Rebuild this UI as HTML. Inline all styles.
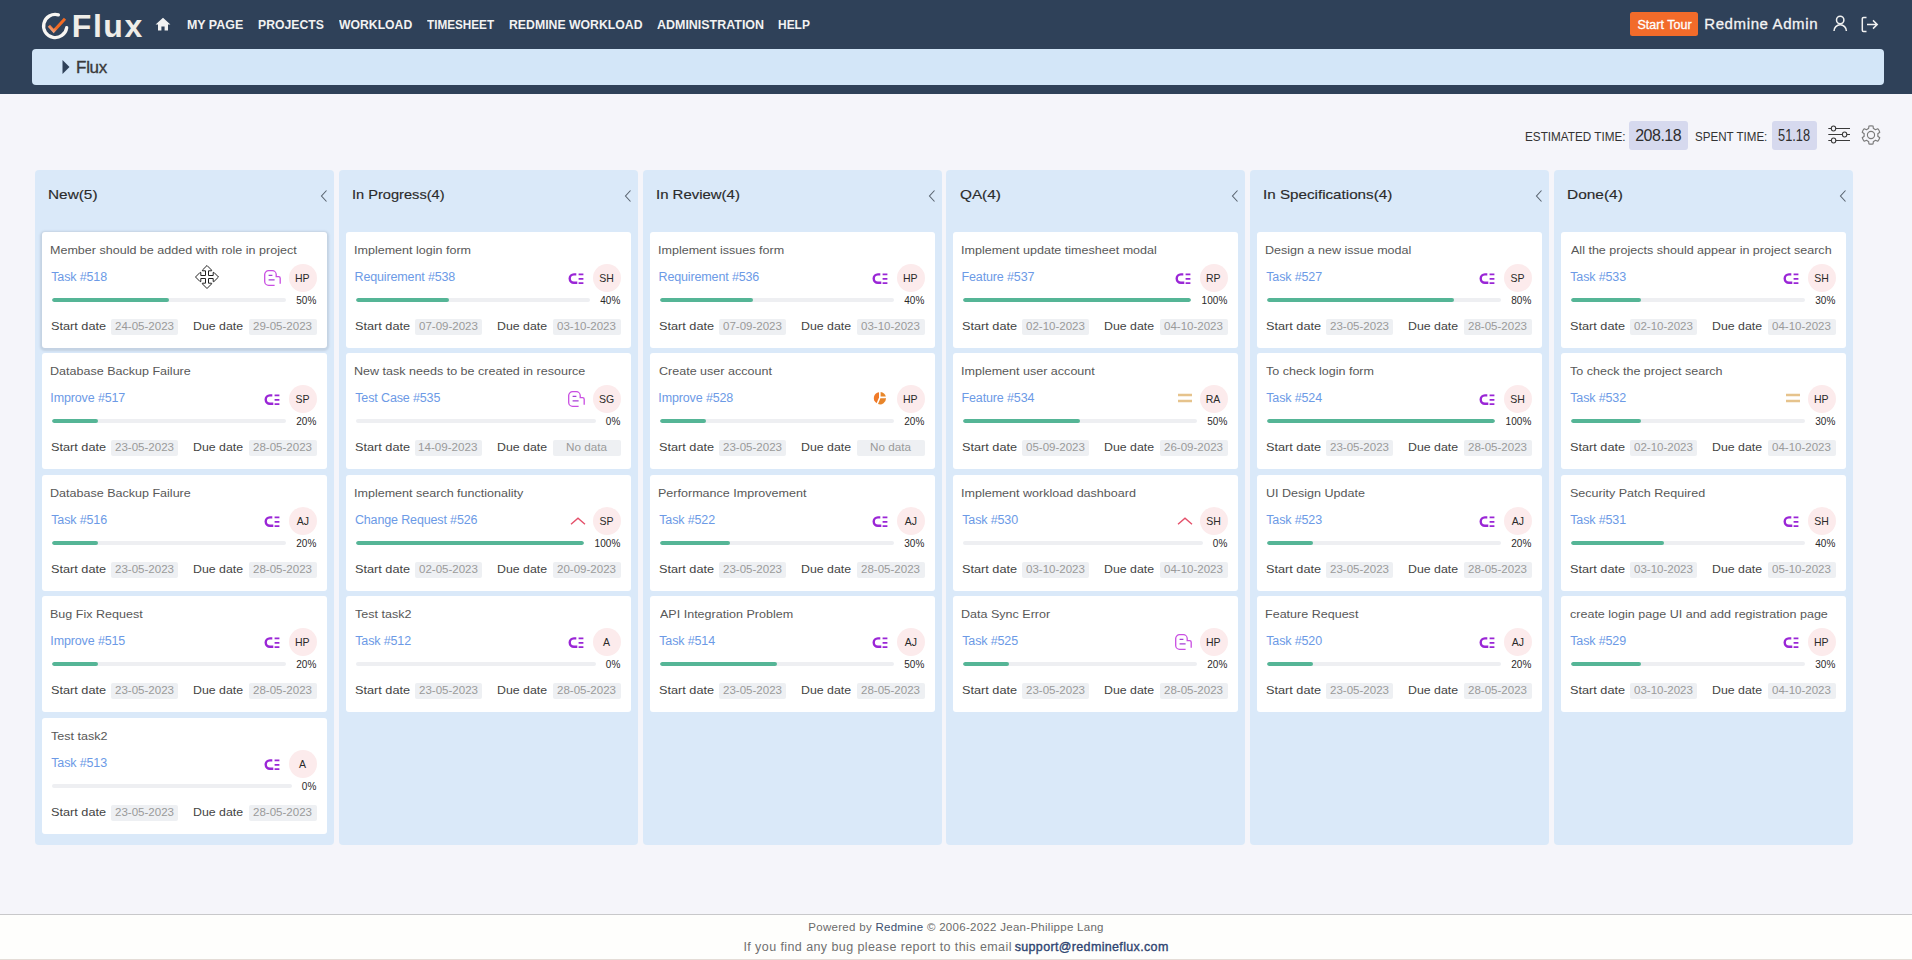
<!DOCTYPE html>
<html><head><meta charset="utf-8"><title>Flux</title>
<style>
*{box-sizing:border-box}
html,body{margin:0;padding:0}
body{width:1912px;height:960px;overflow:hidden;background:#f5f5fa;position:relative;font-family:"Liberation Sans",sans-serif}
.t{position:absolute;white-space:nowrap;line-height:1;}
#hdr{position:absolute;left:0;top:0;width:1912px;height:94px;background:#2f4159}
#crumb{position:absolute;left:32px;top:49.2px;width:1852px;height:35.6px;background:#d3e6f8;border-radius:4px}
.col{position:absolute;top:170px;width:298.5px;height:675px;background:#dae9f9;border-radius:4px}
.card{position:absolute;width:284.6px;height:116px;background:#fff;border-radius:3px}
.card.hov{box-shadow:0 1px 2px 2px rgba(90,100,120,.17)}
.ic{position:absolute;line-height:0}
.ic svg{display:block}
.av{position:absolute;width:28px;height:28px;border-radius:50%;background:#fcebec}
.bar{position:absolute;height:4px;background:#eeeff2;border-radius:2px;overflow:hidden}
.bar i{display:block;height:4px;background:#55b596;border-radius:2px}
.db{position:absolute;width:67.5px;height:16px;background:#eef0f3;border-radius:2px}
.chev{position:absolute}
.vb{position:absolute;top:121.2px;height:28.7px;background:#d6d9ee;border-radius:3px}
#foot{position:absolute;left:0;top:914px;width:1912px;height:46px;background:#fefefc;border-top:1px solid #c8c8ca;border-bottom:1px solid #e4dcd6}
</style></head><body>
<div id="hdr"></div>
<svg style="position:absolute;left:40px;top:10.8px" width="30" height="32" viewBox="0 0 30 32">
<defs><linearGradient id="ck" x1="0" y1="1" x2="1" y2="0"><stop offset="0" stop-color="#f6b9a0"/><stop offset="0.35" stop-color="#f26a22"/><stop offset="1" stop-color="#f26a22"/></linearGradient></defs>
<path d="M18.4 3.85 A11.6 11.6 0 1 0 26.67 16.71" fill="none" stroke="#f7f5f2" stroke-width="3.3" stroke-linecap="round"/>
<path d="M8.9 14.8 L13.7 20 L25 7.7" fill="none" stroke="url(#ck)" stroke-width="3" stroke-linecap="butt" stroke-linejoin="miter"/>
</svg>
<svg style="position:absolute;left:155px;top:17px" width="16" height="14" viewBox="0 0 16 14"><path d="M8 0.8 L15.4 7.6 H13 V13.6 H9.6 V9.4 H6.4 V13.6 H3 V7.6 H0.6 Z" fill="#f2f2f2"/></svg>
<div class="t" style="left:186.96px;top:18.06px;font-size:13.4px;color:#f2f2f2;transform:scaleX(0.9281);transform-origin:0 0;font-weight:bold;">MY PAGE</div><div class="t" style="left:257.58px;top:18.06px;font-size:13.4px;color:#f2f2f2;transform:scaleX(0.9118);transform-origin:0 0;font-weight:bold;">PROJECTS</div><div class="t" style="left:338.70px;top:18.06px;font-size:13.4px;color:#f2f2f2;transform:scaleX(0.9117);transform-origin:0 0;font-weight:bold;">WORKLOAD</div><div class="t" style="left:426.77px;top:18.06px;font-size:13.4px;color:#f2f2f2;transform:scaleX(0.8757);transform-origin:0 0;font-weight:bold;">TIMESHEET</div><div class="t" style="left:508.98px;top:18.06px;font-size:13.4px;color:#f2f2f2;transform:scaleX(0.9163);transform-origin:0 0;font-weight:bold;">REDMINE WORKLOAD</div><div class="t" style="left:657.27px;top:18.06px;font-size:13.4px;color:#f2f2f2;transform:scaleX(0.9306);transform-origin:0 0;font-weight:bold;">ADMINISTRATION</div><div class="t" style="left:778.20px;top:18.06px;font-size:13.4px;color:#f2f2f2;transform:scaleX(0.8924);transform-origin:0 0;font-weight:bold;">HELP</div><div class="t" style="left:71.85px;top:10.11px;font-size:32px;color:#efede8;letter-spacing:1.533px;font-weight:bold;">Flux</div><div style="position:absolute;left:1630px;top:12px;width:68px;height:24px;background:#f26b2a;border-radius:2.5px"></div><div class="t" style="left:1637.45px;top:18.92px;font-size:12.5px;color:#ffffff;letter-spacing:0.022px;-webkit-text-stroke:0.3px #fff;">Start Tour</div><div class="t" style="left:1704.20px;top:16.40px;font-size:15px;color:#f4f4f4;letter-spacing:0.621px;-webkit-text-stroke:0.3px #f4f4f4;">Redmine Admin</div>
<svg style="position:absolute;left:1832px;top:15px" width="16" height="17" viewBox="0 0 16 17"><circle cx="8.2" cy="5" r="3.7" fill="none" stroke="#f2f2f2" stroke-width="1.5"/><path d="M2 16 A6.2 6.2 0 0 1 14.4 16" fill="none" stroke="#f2f2f2" stroke-width="1.5"/></svg>
<svg style="position:absolute;left:1861px;top:16px" width="18" height="17" viewBox="0 0 18 17"><path d="M5.5 1.5 H2.5 A1.2 1.2 0 0 0 1.3 2.7 V14.3 A1.2 1.2 0 0 0 2.5 15.5 H5.5" fill="none" stroke="#f2f2f2" stroke-width="1.5"/><path d="M6 8.5 H16.2 M12 4.4 L16.2 8.5 L12 12.6" fill="none" stroke="#f2f2f2" stroke-width="1.5"/></svg>
<div id="crumb"></div>
<svg style="position:absolute;left:62px;top:60px" width="8" height="14" viewBox="0 0 8 14"><path d="M0.5 0 L7.5 7 L0.5 14 Z" fill="#2f4159"/></svg>
<div class="t" style="left:76.10px;top:59.01px;font-size:17px;color:#3a3a3a;letter-spacing:-0.333px;-webkit-text-stroke:0.35px #3a3a3a;">Flux</div>
<div class="vb" style="left:1629.3px;width:58.7px"></div>
<div class="vb" style="left:1772px;width:45px"></div>
<div class="t" style="left:1525.04px;top:130.26px;font-size:13.4px;color:#333;transform:scaleX(0.8757);transform-origin:0 0;">ESTIMATED TIME:</div><div class="t" style="left:1635.20px;top:128.46px;font-size:16px;color:#2e2e2e;letter-spacing:-0.490px;">208.18</div><div class="t" style="left:1695.48px;top:130.26px;font-size:13.4px;color:#333;transform:scaleX(0.8655);transform-origin:0 0;">SPENT TIME:</div><div class="t" style="left:1778.48px;top:128.46px;font-size:16px;color:#2e2e2e;transform:scaleX(0.8010);transform-origin:0 0;">51.18</div>
<svg style="position:absolute;left:1828px;top:125px" width="23" height="19" viewBox="0 0 23 19"><g fill="none" stroke="#3a3a3a" stroke-width="1.1"><path d="M0.3 3.5 H3.2 M7.8 3.5 H22 M0.3 9.5 H14.3 M18.9 9.5 H22 M0.3 15.5 H3.3 M7.9 15.5 H22"/><ellipse cx="5.5" cy="3.5" rx="2.2" ry="2.5"/><ellipse cx="16.6" cy="9.5" rx="2.2" ry="2.5"/><ellipse cx="5.6" cy="15.5" rx="2.2" ry="2.5"/></g></svg>
<svg style="position:absolute;left:1860.7px;top:125px" width="20" height="20" viewBox="2 2 20 20"><path fill="none" stroke="#7a7a7a" stroke-width="1.15" stroke-linejoin="round" d="M9.64 5.52L9.93 3.04A9.2 9.2 0 0 1 14.07 3.04L14.36 5.52A6.9 6.9 0 0 1 16.44 6.71L18.73 5.73A9.2 9.2 0 0 1 20.80 9.31L18.80 10.80A6.9 6.9 0 0 1 18.80 13.20L20.80 14.69A9.2 9.2 0 0 1 18.73 18.27L16.44 17.29A6.9 6.9 0 0 1 14.36 18.48L14.07 20.96A9.2 9.2 0 0 1 9.93 20.96L9.64 18.48A6.9 6.9 0 0 1 7.56 17.29L5.27 18.27A9.2 9.2 0 0 1 3.20 14.69L5.20 13.20A6.9 6.9 0 0 1 5.20 10.80L3.20 9.31A9.2 9.2 0 0 1 5.27 5.73L7.56 6.71A6.9 6.9 0 0 1 9.64 5.52Z"/><circle cx="12" cy="12" r="3.6" fill="none" stroke="#7a7a7a" stroke-width="1.15"/></svg>
<div class="col" style="left:35.00px;"></div>
<div class="t" style="left:48.38px;top:188.73px;font-size:12.6px;color:#2b2b2b;transform:scaleX(1.2201);transform-origin:0 0;-webkit-text-stroke:0.15px #2b2b2b;">New(5)</div>
<svg class="chev" style="left:319.00px;top:189px" width="10" height="14" viewBox="0 0 10 14"><path d="M7.5 1.5 L2.5 7 L7.5 12.5" fill="none" stroke="#5a6470" stroke-width="1.1"/></svg>
<div class="card hov" style="left:42.00px;top:232.00px;"></div>
<div class="t" style="left:50.46px;top:244.87px;font-size:11.5px;color:#585858;transform:scaleX(1.0900);transform-origin:0 0;">Member should be added with role in project</div>
<div class="t" style="left:51.25px;top:271.32px;font-size:12.5px;color:#6c9ae6;letter-spacing:-0.141px;">Task #518</div>
<div class="ic" style="left:263.50px;top:270.30px;"><svg width="17" height="16" viewBox="0 0 17 16"><path d="M16.2 13.8 V8.2 Q16.2 6.6 14.6 6.6 H12.2 V4.6 A3.9 3.9 0 0 0 8.3 0.7 H4.6 A3.9 3.9 0 0 0 0.7 4.6 V11.4 A3.9 3.9 0 0 0 4.6 15.3 H10.6" fill="none" stroke="#c94ee2" stroke-width="1.3"/><path d="M4.6 5.4h3.8 M4.6 9.9h6" stroke="#a63fd6" stroke-width="1.2"/></svg></div>
<div class="av" style="left:288.50px;top:263.70px;"></div>
<div class="t" style="left:294.95px;top:272.71px;font-size:10.5px;color:#2a2a2a;">HP</div>
<div class="t" style="left:296.16px;top:296.14px;font-size:10px;color:#2a2a2a;letter-spacing:0.096px;">50%</div>
<div class="bar" style="left:51.50px;top:298.20px;width:234.49px;"><i style="width:117.24px"></i></div>
<div class="t" style="left:50.92px;top:321.29px;font-size:11px;color:#444444;transform:scaleX(1.1551);transform-origin:0 0;">Start date</div>
<div class="db" style="left:110.50px;top:319.00px;"></div>
<div class="t" style="left:114.72px;top:321.74px;font-size:10px;color:#9a9a9a;transform:scaleX(1.1542);transform-origin:0 0;">24-05-2023</div>
<div class="t" style="left:192.99px;top:321.29px;font-size:11px;color:#444444;transform:scaleX(1.1201);transform-origin:0 0;">Due date</div>
<div class="db" style="left:249.00px;top:319.00px;"></div>
<div class="t" style="left:253.22px;top:321.74px;font-size:10px;color:#9a9a9a;transform:scaleX(1.1542);transform-origin:0 0;">29-05-2023</div>
<div class="card" style="left:42.00px;top:353.00px;"></div>
<div class="t" style="left:50.46px;top:365.87px;font-size:11.5px;color:#585858;transform:scaleX(1.0900);transform-origin:0 0;">Database Backup Failure</div>
<div class="t" style="left:50.35px;top:392.32px;font-size:12.5px;color:#6c9ae6;letter-spacing:-0.136px;">Improve #517</div>
<div class="ic" style="left:263.50px;top:393.00px;"><svg width="16" height="13" viewBox="0 0 16 13"><path d="M8.3 2.4 H5.9 A4.2 4.2 0 0 0 5.9 10.8 H9.3" fill="none" stroke="#9a26d6" stroke-width="2.4"/><path d="M10.6 2.3h4.8 M10.6 6.9h4.8 M10.6 11.2h4.8" stroke="#9a26d6" stroke-width="1.8"/></svg></div>
<div class="av" style="left:288.50px;top:384.70px;"></div>
<div class="t" style="left:295.45px;top:393.71px;font-size:10.5px;color:#2a2a2a;">SP</div>
<div class="t" style="left:296.16px;top:417.14px;font-size:10px;color:#2a2a2a;letter-spacing:0.096px;">20%</div>
<div class="bar" style="left:51.50px;top:419.20px;width:234.49px;"><i style="width:46.90px"></i></div>
<div class="t" style="left:50.92px;top:442.29px;font-size:11px;color:#444444;transform:scaleX(1.1551);transform-origin:0 0;">Start date</div>
<div class="db" style="left:110.50px;top:440.00px;"></div>
<div class="t" style="left:114.72px;top:442.74px;font-size:10px;color:#9a9a9a;transform:scaleX(1.1542);transform-origin:0 0;">23-05-2023</div>
<div class="t" style="left:192.99px;top:442.29px;font-size:11px;color:#444444;transform:scaleX(1.1201);transform-origin:0 0;">Due date</div>
<div class="db" style="left:249.00px;top:440.00px;"></div>
<div class="t" style="left:253.22px;top:442.74px;font-size:10px;color:#9a9a9a;transform:scaleX(1.1542);transform-origin:0 0;">28-05-2023</div>
<div class="card" style="left:42.00px;top:475.00px;"></div>
<div class="t" style="left:50.46px;top:487.87px;font-size:11.5px;color:#585858;transform:scaleX(1.0900);transform-origin:0 0;">Database Backup Failure</div>
<div class="t" style="left:51.25px;top:514.32px;font-size:12.5px;color:#6c9ae6;letter-spacing:-0.141px;">Task #516</div>
<div class="ic" style="left:263.50px;top:515.00px;"><svg width="16" height="13" viewBox="0 0 16 13"><path d="M8.3 2.4 H5.9 A4.2 4.2 0 0 0 5.9 10.8 H9.3" fill="none" stroke="#9a26d6" stroke-width="2.4"/><path d="M10.6 2.3h4.8 M10.6 6.9h4.8 M10.6 11.2h4.8" stroke="#9a26d6" stroke-width="1.8"/></svg></div>
<div class="av" style="left:288.50px;top:506.70px;"></div>
<div class="t" style="left:296.65px;top:515.71px;font-size:10.5px;color:#2a2a2a;">AJ</div>
<div class="t" style="left:296.16px;top:539.13px;font-size:10px;color:#2a2a2a;letter-spacing:0.096px;">20%</div>
<div class="bar" style="left:51.50px;top:541.20px;width:234.49px;"><i style="width:46.90px"></i></div>
<div class="t" style="left:50.92px;top:564.29px;font-size:11px;color:#444444;transform:scaleX(1.1551);transform-origin:0 0;">Start date</div>
<div class="db" style="left:110.50px;top:562.00px;"></div>
<div class="t" style="left:114.72px;top:564.74px;font-size:10px;color:#9a9a9a;transform:scaleX(1.1542);transform-origin:0 0;">23-05-2023</div>
<div class="t" style="left:192.99px;top:564.29px;font-size:11px;color:#444444;transform:scaleX(1.1201);transform-origin:0 0;">Due date</div>
<div class="db" style="left:249.00px;top:562.00px;"></div>
<div class="t" style="left:253.22px;top:564.74px;font-size:10px;color:#9a9a9a;transform:scaleX(1.1542);transform-origin:0 0;">28-05-2023</div>
<div class="card" style="left:42.00px;top:596.00px;"></div>
<div class="t" style="left:50.46px;top:608.87px;font-size:11.5px;color:#585858;transform:scaleX(1.0900);transform-origin:0 0;">Bug Fix Request</div>
<div class="t" style="left:50.35px;top:635.32px;font-size:12.5px;color:#6c9ae6;letter-spacing:-0.136px;">Improve #515</div>
<div class="ic" style="left:263.50px;top:636.00px;"><svg width="16" height="13" viewBox="0 0 16 13"><path d="M8.3 2.4 H5.9 A4.2 4.2 0 0 0 5.9 10.8 H9.3" fill="none" stroke="#9a26d6" stroke-width="2.4"/><path d="M10.6 2.3h4.8 M10.6 6.9h4.8 M10.6 11.2h4.8" stroke="#9a26d6" stroke-width="1.8"/></svg></div>
<div class="av" style="left:288.50px;top:627.70px;"></div>
<div class="t" style="left:294.95px;top:636.71px;font-size:10.5px;color:#2a2a2a;">HP</div>
<div class="t" style="left:296.16px;top:660.13px;font-size:10px;color:#2a2a2a;letter-spacing:0.096px;">20%</div>
<div class="bar" style="left:51.50px;top:662.20px;width:234.49px;"><i style="width:46.90px"></i></div>
<div class="t" style="left:50.92px;top:685.29px;font-size:11px;color:#444444;transform:scaleX(1.1551);transform-origin:0 0;">Start date</div>
<div class="db" style="left:110.50px;top:683.00px;"></div>
<div class="t" style="left:114.72px;top:685.74px;font-size:10px;color:#9a9a9a;transform:scaleX(1.1542);transform-origin:0 0;">23-05-2023</div>
<div class="t" style="left:192.99px;top:685.29px;font-size:11px;color:#444444;transform:scaleX(1.1201);transform-origin:0 0;">Due date</div>
<div class="db" style="left:249.00px;top:683.00px;"></div>
<div class="t" style="left:253.22px;top:685.74px;font-size:10px;color:#9a9a9a;transform:scaleX(1.1542);transform-origin:0 0;">28-05-2023</div>
<div class="card" style="left:42.00px;top:718.00px;"></div>
<div class="t" style="left:51.23px;top:730.87px;font-size:11.5px;color:#585858;transform:scaleX(1.0900);transform-origin:0 0;">Test task2</div>
<div class="t" style="left:51.25px;top:757.32px;font-size:12.5px;color:#6c9ae6;letter-spacing:-0.141px;">Task #513</div>
<div class="ic" style="left:263.50px;top:758.00px;"><svg width="16" height="13" viewBox="0 0 16 13"><path d="M8.3 2.4 H5.9 A4.2 4.2 0 0 0 5.9 10.8 H9.3" fill="none" stroke="#9a26d6" stroke-width="2.4"/><path d="M10.6 2.3h4.8 M10.6 6.9h4.8 M10.6 11.2h4.8" stroke="#9a26d6" stroke-width="1.8"/></svg></div>
<div class="av" style="left:288.50px;top:749.70px;"></div>
<div class="t" style="left:298.90px;top:758.71px;font-size:10.5px;color:#2a2a2a;">A</div>
<div class="t" style="left:301.76px;top:782.13px;font-size:10px;color:#2a2a2a;letter-spacing:0.137px;">0%</div>
<div class="bar" style="left:51.50px;top:784.20px;width:240.05px;"><i style="width:0.00px"></i></div>
<div class="t" style="left:50.92px;top:807.29px;font-size:11px;color:#444444;transform:scaleX(1.1551);transform-origin:0 0;">Start date</div>
<div class="db" style="left:110.50px;top:805.00px;"></div>
<div class="t" style="left:114.72px;top:807.74px;font-size:10px;color:#9a9a9a;transform:scaleX(1.1542);transform-origin:0 0;">23-05-2023</div>
<div class="t" style="left:192.99px;top:807.29px;font-size:11px;color:#444444;transform:scaleX(1.1201);transform-origin:0 0;">Due date</div>
<div class="db" style="left:249.00px;top:805.00px;"></div>
<div class="t" style="left:253.22px;top:807.74px;font-size:10px;color:#9a9a9a;transform:scaleX(1.1542);transform-origin:0 0;">28-05-2023</div>
<div class="col" style="left:339.00px;"></div>
<div class="t" style="left:352.27px;top:188.73px;font-size:12.6px;color:#2b2b2b;transform:scaleX(1.1597);transform-origin:0 0;-webkit-text-stroke:0.15px #2b2b2b;">In Progress(4)</div>
<svg class="chev" style="left:623.00px;top:189px" width="10" height="14" viewBox="0 0 10 14"><path d="M7.5 1.5 L2.5 7 L7.5 12.5" fill="none" stroke="#5a6470" stroke-width="1.1"/></svg>
<div class="card" style="left:346.00px;top:232.00px;"></div>
<div class="t" style="left:354.36px;top:244.87px;font-size:11.5px;color:#585858;transform:scaleX(1.0900);transform-origin:0 0;">Implement login form</div>
<div class="t" style="left:354.50px;top:271.32px;font-size:12.5px;color:#6c9ae6;letter-spacing:-0.135px;">Requirement #538</div>
<div class="ic" style="left:567.50px;top:272.00px;"><svg width="16" height="13" viewBox="0 0 16 13"><path d="M8.3 2.4 H5.9 A4.2 4.2 0 0 0 5.9 10.8 H9.3" fill="none" stroke="#9a26d6" stroke-width="2.4"/><path d="M10.6 2.3h4.8 M10.6 6.9h4.8 M10.6 11.2h4.8" stroke="#9a26d6" stroke-width="1.8"/></svg></div>
<div class="av" style="left:592.50px;top:263.70px;"></div>
<div class="t" style="left:599.30px;top:272.71px;font-size:10.5px;color:#2a2a2a;">SH</div>
<div class="t" style="left:600.16px;top:296.14px;font-size:10px;color:#2a2a2a;letter-spacing:0.097px;">40%</div>
<div class="bar" style="left:355.50px;top:298.20px;width:234.49px;"><i style="width:93.79px"></i></div>
<div class="t" style="left:354.92px;top:321.29px;font-size:11px;color:#444444;transform:scaleX(1.1551);transform-origin:0 0;">Start date</div>
<div class="db" style="left:414.50px;top:319.00px;"></div>
<div class="t" style="left:418.84px;top:321.74px;font-size:10px;color:#9a9a9a;transform:scaleX(1.1519);transform-origin:0 0;">07-09-2023</div>
<div class="t" style="left:496.99px;top:321.29px;font-size:11px;color:#444444;transform:scaleX(1.1201);transform-origin:0 0;">Due date</div>
<div class="db" style="left:553.00px;top:319.00px;"></div>
<div class="t" style="left:557.34px;top:321.74px;font-size:10px;color:#9a9a9a;transform:scaleX(1.1519);transform-origin:0 0;">03-10-2023</div>
<div class="card" style="left:346.00px;top:353.00px;"></div>
<div class="t" style="left:354.46px;top:365.87px;font-size:11.5px;color:#585858;transform:scaleX(1.0900);transform-origin:0 0;">New task needs to be created in resource</div>
<div class="t" style="left:355.25px;top:392.32px;font-size:12.5px;color:#6c9ae6;letter-spacing:-0.132px;">Test Case #535</div>
<div class="ic" style="left:567.50px;top:391.30px;"><svg width="17" height="16" viewBox="0 0 17 16"><path d="M16.2 13.8 V8.2 Q16.2 6.6 14.6 6.6 H12.2 V4.6 A3.9 3.9 0 0 0 8.3 0.7 H4.6 A3.9 3.9 0 0 0 0.7 4.6 V11.4 A3.9 3.9 0 0 0 4.6 15.3 H10.6" fill="none" stroke="#c94ee2" stroke-width="1.3"/><path d="M4.6 5.4h3.8 M4.6 9.9h6" stroke="#a63fd6" stroke-width="1.2"/></svg></div>
<div class="av" style="left:592.50px;top:384.70px;"></div>
<div class="t" style="left:598.97px;top:393.71px;font-size:10.5px;color:#2a2a2a;">SG</div>
<div class="t" style="left:605.76px;top:417.14px;font-size:10px;color:#2a2a2a;letter-spacing:0.137px;">0%</div>
<div class="bar" style="left:355.50px;top:419.20px;width:240.05px;"><i style="width:0.00px"></i></div>
<div class="t" style="left:354.92px;top:442.29px;font-size:11px;color:#444444;transform:scaleX(1.1551);transform-origin:0 0;">Start date</div>
<div class="db" style="left:414.50px;top:440.00px;"></div>
<div class="t" style="left:418.43px;top:442.74px;font-size:10px;color:#9a9a9a;transform:scaleX(1.1600);transform-origin:0 0;">14-09-2023</div>
<div class="t" style="left:496.99px;top:442.29px;font-size:11px;color:#444444;transform:scaleX(1.1201);transform-origin:0 0;">Due date</div>
<div class="db" style="left:553.00px;top:440.00px;"></div>
<div class="t" style="left:565.85px;top:442.31px;font-size:10.5px;color:#9a9a9a;transform:scaleX(1.1127);transform-origin:0 0;">No data</div>
<div class="card" style="left:346.00px;top:475.00px;"></div>
<div class="t" style="left:354.36px;top:487.87px;font-size:11.5px;color:#585858;transform:scaleX(1.0900);transform-origin:0 0;">Implement search functionality</div>
<div class="t" style="left:354.90px;top:514.32px;font-size:12.5px;color:#6c9ae6;letter-spacing:-0.138px;">Change Request #526</div>
<div class="ic" style="left:569.90px;top:516.20px;"><svg width="16" height="10" viewBox="0 0 16 10"><path d="M1 8.2 L8 2.2 L15 8.2" fill="none" stroke="#e4506a" stroke-width="1.4"/></svg></div>
<div class="av" style="left:592.50px;top:506.70px;"></div>
<div class="t" style="left:599.45px;top:515.71px;font-size:10.5px;color:#2a2a2a;">SP</div>
<div class="t" style="left:594.50px;top:539.13px;font-size:10px;color:#2a2a2a;letter-spacing:0.082px;">100%</div>
<div class="bar" style="left:355.50px;top:541.20px;width:228.92px;"><i style="width:228.92px"></i></div>
<div class="t" style="left:354.92px;top:564.29px;font-size:11px;color:#444444;transform:scaleX(1.1551);transform-origin:0 0;">Start date</div>
<div class="db" style="left:414.50px;top:562.00px;"></div>
<div class="t" style="left:418.84px;top:564.74px;font-size:10px;color:#9a9a9a;transform:scaleX(1.1519);transform-origin:0 0;">02-05-2023</div>
<div class="t" style="left:496.99px;top:564.29px;font-size:11px;color:#444444;transform:scaleX(1.1201);transform-origin:0 0;">Due date</div>
<div class="db" style="left:553.00px;top:562.00px;"></div>
<div class="t" style="left:557.22px;top:564.74px;font-size:10px;color:#9a9a9a;transform:scaleX(1.1542);transform-origin:0 0;">20-09-2023</div>
<div class="card" style="left:346.00px;top:596.00px;"></div>
<div class="t" style="left:355.23px;top:608.87px;font-size:11.5px;color:#585858;transform:scaleX(1.0900);transform-origin:0 0;">Test task2</div>
<div class="t" style="left:355.25px;top:635.32px;font-size:12.5px;color:#6c9ae6;letter-spacing:-0.140px;">Task #512</div>
<div class="ic" style="left:567.50px;top:636.00px;"><svg width="16" height="13" viewBox="0 0 16 13"><path d="M8.3 2.4 H5.9 A4.2 4.2 0 0 0 5.9 10.8 H9.3" fill="none" stroke="#9a26d6" stroke-width="2.4"/><path d="M10.6 2.3h4.8 M10.6 6.9h4.8 M10.6 11.2h4.8" stroke="#9a26d6" stroke-width="1.8"/></svg></div>
<div class="av" style="left:592.50px;top:627.70px;"></div>
<div class="t" style="left:602.90px;top:636.71px;font-size:10.5px;color:#2a2a2a;">A</div>
<div class="t" style="left:605.76px;top:660.13px;font-size:10px;color:#2a2a2a;letter-spacing:0.137px;">0%</div>
<div class="bar" style="left:355.50px;top:662.20px;width:240.05px;"><i style="width:0.00px"></i></div>
<div class="t" style="left:354.92px;top:685.29px;font-size:11px;color:#444444;transform:scaleX(1.1551);transform-origin:0 0;">Start date</div>
<div class="db" style="left:414.50px;top:683.00px;"></div>
<div class="t" style="left:418.72px;top:685.74px;font-size:10px;color:#9a9a9a;transform:scaleX(1.1542);transform-origin:0 0;">23-05-2023</div>
<div class="t" style="left:496.99px;top:685.29px;font-size:11px;color:#444444;transform:scaleX(1.1201);transform-origin:0 0;">Due date</div>
<div class="db" style="left:553.00px;top:683.00px;"></div>
<div class="t" style="left:557.22px;top:685.74px;font-size:10px;color:#9a9a9a;transform:scaleX(1.1542);transform-origin:0 0;">28-05-2023</div>
<div class="col" style="left:643.00px;"></div>
<div class="t" style="left:656.24px;top:188.73px;font-size:12.6px;color:#2b2b2b;transform:scaleX(1.1866);transform-origin:0 0;-webkit-text-stroke:0.15px #2b2b2b;">In Review(4)</div>
<svg class="chev" style="left:927.00px;top:189px" width="10" height="14" viewBox="0 0 10 14"><path d="M7.5 1.5 L2.5 7 L7.5 12.5" fill="none" stroke="#5a6470" stroke-width="1.1"/></svg>
<div class="card" style="left:650.00px;top:232.00px;"></div>
<div class="t" style="left:658.36px;top:244.87px;font-size:11.5px;color:#585858;transform:scaleX(1.0900);transform-origin:0 0;">Implement issues form</div>
<div class="t" style="left:658.50px;top:271.32px;font-size:12.5px;color:#6c9ae6;letter-spacing:-0.135px;">Requirement #536</div>
<div class="ic" style="left:871.50px;top:272.00px;"><svg width="16" height="13" viewBox="0 0 16 13"><path d="M8.3 2.4 H5.9 A4.2 4.2 0 0 0 5.9 10.8 H9.3" fill="none" stroke="#9a26d6" stroke-width="2.4"/><path d="M10.6 2.3h4.8 M10.6 6.9h4.8 M10.6 11.2h4.8" stroke="#9a26d6" stroke-width="1.8"/></svg></div>
<div class="av" style="left:896.50px;top:263.70px;"></div>
<div class="t" style="left:902.95px;top:272.71px;font-size:10.5px;color:#2a2a2a;">HP</div>
<div class="t" style="left:904.16px;top:296.14px;font-size:10px;color:#2a2a2a;letter-spacing:0.097px;">40%</div>
<div class="bar" style="left:659.50px;top:298.20px;width:234.49px;"><i style="width:93.79px"></i></div>
<div class="t" style="left:658.92px;top:321.29px;font-size:11px;color:#444444;transform:scaleX(1.1551);transform-origin:0 0;">Start date</div>
<div class="db" style="left:718.50px;top:319.00px;"></div>
<div class="t" style="left:722.84px;top:321.74px;font-size:10px;color:#9a9a9a;transform:scaleX(1.1519);transform-origin:0 0;">07-09-2023</div>
<div class="t" style="left:800.99px;top:321.29px;font-size:11px;color:#444444;transform:scaleX(1.1201);transform-origin:0 0;">Due date</div>
<div class="db" style="left:857.00px;top:319.00px;"></div>
<div class="t" style="left:861.34px;top:321.74px;font-size:10px;color:#9a9a9a;transform:scaleX(1.1519);transform-origin:0 0;">03-10-2023</div>
<div class="card" style="left:650.00px;top:353.00px;"></div>
<div class="t" style="left:658.90px;top:365.87px;font-size:11.5px;color:#585858;transform:scaleX(1.0900);transform-origin:0 0;">Create user account</div>
<div class="t" style="left:658.35px;top:392.32px;font-size:12.5px;color:#6c9ae6;letter-spacing:-0.136px;">Improve #528</div>
<div class="ic" style="left:871.90px;top:390.00px;"><svg width="16" height="16" viewBox="0 0 16 16"><path d="M7 2.2 A6 6 0 0 0 4.6 13.2 L7 7.6 Z" fill="#f07a28"/><path d="M8.6 2 A6 6 0 0 1 13.8 6.6 H8.6 Z" fill="#e8872a"/><path d="M8.4 8.2 H14 A6 6 0 0 1 6 14 Z" fill="#e8852a"/></svg></div>
<div class="av" style="left:896.50px;top:384.70px;"></div>
<div class="t" style="left:902.95px;top:393.71px;font-size:10.5px;color:#2a2a2a;">HP</div>
<div class="t" style="left:904.16px;top:417.14px;font-size:10px;color:#2a2a2a;letter-spacing:0.096px;">20%</div>
<div class="bar" style="left:659.50px;top:419.20px;width:234.49px;"><i style="width:46.90px"></i></div>
<div class="t" style="left:658.92px;top:442.29px;font-size:11px;color:#444444;transform:scaleX(1.1551);transform-origin:0 0;">Start date</div>
<div class="db" style="left:718.50px;top:440.00px;"></div>
<div class="t" style="left:722.72px;top:442.74px;font-size:10px;color:#9a9a9a;transform:scaleX(1.1542);transform-origin:0 0;">23-05-2023</div>
<div class="t" style="left:800.99px;top:442.29px;font-size:11px;color:#444444;transform:scaleX(1.1201);transform-origin:0 0;">Due date</div>
<div class="db" style="left:857.00px;top:440.00px;"></div>
<div class="t" style="left:869.85px;top:442.31px;font-size:10.5px;color:#9a9a9a;transform:scaleX(1.1127);transform-origin:0 0;">No data</div>
<div class="card" style="left:650.00px;top:475.00px;"></div>
<div class="t" style="left:658.46px;top:487.87px;font-size:11.5px;color:#585858;transform:scaleX(1.0900);transform-origin:0 0;">Performance Improvement</div>
<div class="t" style="left:659.25px;top:514.32px;font-size:12.5px;color:#6c9ae6;letter-spacing:-0.140px;">Task #522</div>
<div class="ic" style="left:871.50px;top:515.00px;"><svg width="16" height="13" viewBox="0 0 16 13"><path d="M8.3 2.4 H5.9 A4.2 4.2 0 0 0 5.9 10.8 H9.3" fill="none" stroke="#9a26d6" stroke-width="2.4"/><path d="M10.6 2.3h4.8 M10.6 6.9h4.8 M10.6 11.2h4.8" stroke="#9a26d6" stroke-width="1.8"/></svg></div>
<div class="av" style="left:896.50px;top:506.70px;"></div>
<div class="t" style="left:904.65px;top:515.71px;font-size:10.5px;color:#2a2a2a;">AJ</div>
<div class="t" style="left:904.16px;top:539.13px;font-size:10px;color:#2a2a2a;letter-spacing:0.097px;">30%</div>
<div class="bar" style="left:659.50px;top:541.20px;width:234.49px;"><i style="width:70.35px"></i></div>
<div class="t" style="left:658.92px;top:564.29px;font-size:11px;color:#444444;transform:scaleX(1.1551);transform-origin:0 0;">Start date</div>
<div class="db" style="left:718.50px;top:562.00px;"></div>
<div class="t" style="left:722.72px;top:564.74px;font-size:10px;color:#9a9a9a;transform:scaleX(1.1542);transform-origin:0 0;">23-05-2023</div>
<div class="t" style="left:800.99px;top:564.29px;font-size:11px;color:#444444;transform:scaleX(1.1201);transform-origin:0 0;">Due date</div>
<div class="db" style="left:857.00px;top:562.00px;"></div>
<div class="t" style="left:861.22px;top:564.74px;font-size:10px;color:#9a9a9a;transform:scaleX(1.1542);transform-origin:0 0;">28-05-2023</div>
<div class="card" style="left:650.00px;top:596.00px;"></div>
<div class="t" style="left:659.50px;top:608.87px;font-size:11.5px;color:#585858;transform:scaleX(1.0900);transform-origin:0 0;">API Integration Problem</div>
<div class="t" style="left:659.25px;top:635.32px;font-size:12.5px;color:#6c9ae6;letter-spacing:-0.141px;">Task #514</div>
<div class="ic" style="left:871.50px;top:636.00px;"><svg width="16" height="13" viewBox="0 0 16 13"><path d="M8.3 2.4 H5.9 A4.2 4.2 0 0 0 5.9 10.8 H9.3" fill="none" stroke="#9a26d6" stroke-width="2.4"/><path d="M10.6 2.3h4.8 M10.6 6.9h4.8 M10.6 11.2h4.8" stroke="#9a26d6" stroke-width="1.8"/></svg></div>
<div class="av" style="left:896.50px;top:627.70px;"></div>
<div class="t" style="left:904.65px;top:636.71px;font-size:10.5px;color:#2a2a2a;">AJ</div>
<div class="t" style="left:904.16px;top:660.13px;font-size:10px;color:#2a2a2a;letter-spacing:0.096px;">50%</div>
<div class="bar" style="left:659.50px;top:662.20px;width:234.49px;"><i style="width:117.24px"></i></div>
<div class="t" style="left:658.92px;top:685.29px;font-size:11px;color:#444444;transform:scaleX(1.1551);transform-origin:0 0;">Start date</div>
<div class="db" style="left:718.50px;top:683.00px;"></div>
<div class="t" style="left:722.72px;top:685.74px;font-size:10px;color:#9a9a9a;transform:scaleX(1.1542);transform-origin:0 0;">23-05-2023</div>
<div class="t" style="left:800.99px;top:685.29px;font-size:11px;color:#444444;transform:scaleX(1.1201);transform-origin:0 0;">Due date</div>
<div class="db" style="left:857.00px;top:683.00px;"></div>
<div class="t" style="left:861.22px;top:685.74px;font-size:10px;color:#9a9a9a;transform:scaleX(1.1542);transform-origin:0 0;">28-05-2023</div>
<div class="col" style="left:946.00px;"></div>
<div class="t" style="left:959.87px;top:188.73px;font-size:12.6px;color:#2b2b2b;transform:scaleX(1.2155);transform-origin:0 0;-webkit-text-stroke:0.15px #2b2b2b;">QA(4)</div>
<svg class="chev" style="left:1230.00px;top:189px" width="10" height="14" viewBox="0 0 10 14"><path d="M7.5 1.5 L2.5 7 L7.5 12.5" fill="none" stroke="#5a6470" stroke-width="1.1"/></svg>
<div class="card" style="left:953.00px;top:232.00px;"></div>
<div class="t" style="left:961.36px;top:244.87px;font-size:11.5px;color:#585858;transform:scaleX(1.0900);transform-origin:0 0;">Implement update timesheet modal</div>
<div class="t" style="left:961.50px;top:271.32px;font-size:12.5px;color:#6c9ae6;letter-spacing:-0.132px;">Feature #537</div>
<div class="ic" style="left:1174.50px;top:272.00px;"><svg width="16" height="13" viewBox="0 0 16 13"><path d="M8.3 2.4 H5.9 A4.2 4.2 0 0 0 5.9 10.8 H9.3" fill="none" stroke="#9a26d6" stroke-width="2.4"/><path d="M10.6 2.3h4.8 M10.6 6.9h4.8 M10.6 11.2h4.8" stroke="#9a26d6" stroke-width="1.8"/></svg></div>
<div class="av" style="left:1199.50px;top:263.70px;"></div>
<div class="t" style="left:1205.95px;top:272.71px;font-size:10.5px;color:#2a2a2a;">RP</div>
<div class="t" style="left:1201.51px;top:296.14px;font-size:10px;color:#2a2a2a;letter-spacing:0.082px;">100%</div>
<div class="bar" style="left:962.50px;top:298.20px;width:228.92px;"><i style="width:228.92px"></i></div>
<div class="t" style="left:961.92px;top:321.29px;font-size:11px;color:#444444;transform:scaleX(1.1551);transform-origin:0 0;">Start date</div>
<div class="db" style="left:1021.50px;top:319.00px;"></div>
<div class="t" style="left:1025.84px;top:321.74px;font-size:10px;color:#9a9a9a;transform:scaleX(1.1519);transform-origin:0 0;">02-10-2023</div>
<div class="t" style="left:1103.99px;top:321.29px;font-size:11px;color:#444444;transform:scaleX(1.1201);transform-origin:0 0;">Due date</div>
<div class="db" style="left:1160.00px;top:319.00px;"></div>
<div class="t" style="left:1164.34px;top:321.74px;font-size:10px;color:#9a9a9a;transform:scaleX(1.1519);transform-origin:0 0;">04-10-2023</div>
<div class="card" style="left:953.00px;top:353.00px;"></div>
<div class="t" style="left:961.36px;top:365.87px;font-size:11.5px;color:#585858;transform:scaleX(1.0900);transform-origin:0 0;">Implement user account</div>
<div class="t" style="left:961.50px;top:392.32px;font-size:12.5px;color:#6c9ae6;letter-spacing:-0.133px;">Feature #534</div>
<div class="ic" style="left:1176.60px;top:392.30px;"><svg width="16" height="12" viewBox="0 0 16 12"><path d="M1 3h14 M1 9h14" stroke="#e6c38c" stroke-width="2.6"/></svg></div>
<div class="av" style="left:1199.50px;top:384.70px;"></div>
<div class="t" style="left:1205.68px;top:393.71px;font-size:10.5px;color:#2a2a2a;">RA</div>
<div class="t" style="left:1207.16px;top:417.14px;font-size:10px;color:#2a2a2a;letter-spacing:0.096px;">50%</div>
<div class="bar" style="left:962.50px;top:419.20px;width:234.49px;"><i style="width:117.24px"></i></div>
<div class="t" style="left:961.92px;top:442.29px;font-size:11px;color:#444444;transform:scaleX(1.1551);transform-origin:0 0;">Start date</div>
<div class="db" style="left:1021.50px;top:440.00px;"></div>
<div class="t" style="left:1025.84px;top:442.74px;font-size:10px;color:#9a9a9a;transform:scaleX(1.1519);transform-origin:0 0;">05-09-2023</div>
<div class="t" style="left:1103.99px;top:442.29px;font-size:11px;color:#444444;transform:scaleX(1.1201);transform-origin:0 0;">Due date</div>
<div class="db" style="left:1160.00px;top:440.00px;"></div>
<div class="t" style="left:1164.22px;top:442.74px;font-size:10px;color:#9a9a9a;transform:scaleX(1.1542);transform-origin:0 0;">26-09-2023</div>
<div class="card" style="left:953.00px;top:475.00px;"></div>
<div class="t" style="left:961.36px;top:487.87px;font-size:11.5px;color:#585858;transform:scaleX(1.0900);transform-origin:0 0;">Implement workload dashboard</div>
<div class="t" style="left:962.25px;top:514.32px;font-size:12.5px;color:#6c9ae6;letter-spacing:-0.141px;">Task #530</div>
<div class="ic" style="left:1176.90px;top:516.20px;"><svg width="16" height="10" viewBox="0 0 16 10"><path d="M1 8.2 L8 2.2 L15 8.2" fill="none" stroke="#e4506a" stroke-width="1.4"/></svg></div>
<div class="av" style="left:1199.50px;top:506.70px;"></div>
<div class="t" style="left:1206.30px;top:515.71px;font-size:10.5px;color:#2a2a2a;">SH</div>
<div class="t" style="left:1212.76px;top:539.13px;font-size:10px;color:#2a2a2a;letter-spacing:0.137px;">0%</div>
<div class="bar" style="left:962.50px;top:541.20px;width:240.05px;"><i style="width:0.00px"></i></div>
<div class="t" style="left:961.92px;top:564.29px;font-size:11px;color:#444444;transform:scaleX(1.1551);transform-origin:0 0;">Start date</div>
<div class="db" style="left:1021.50px;top:562.00px;"></div>
<div class="t" style="left:1025.84px;top:564.74px;font-size:10px;color:#9a9a9a;transform:scaleX(1.1519);transform-origin:0 0;">03-10-2023</div>
<div class="t" style="left:1103.99px;top:564.29px;font-size:11px;color:#444444;transform:scaleX(1.1201);transform-origin:0 0;">Due date</div>
<div class="db" style="left:1160.00px;top:562.00px;"></div>
<div class="t" style="left:1164.34px;top:564.74px;font-size:10px;color:#9a9a9a;transform:scaleX(1.1519);transform-origin:0 0;">04-10-2023</div>
<div class="card" style="left:953.00px;top:596.00px;"></div>
<div class="t" style="left:961.46px;top:608.87px;font-size:11.5px;color:#585858;transform:scaleX(1.0900);transform-origin:0 0;">Data Sync Error</div>
<div class="t" style="left:962.25px;top:635.32px;font-size:12.5px;color:#6c9ae6;letter-spacing:-0.141px;">Task #525</div>
<div class="ic" style="left:1174.50px;top:634.30px;"><svg width="17" height="16" viewBox="0 0 17 16"><path d="M16.2 13.8 V8.2 Q16.2 6.6 14.6 6.6 H12.2 V4.6 A3.9 3.9 0 0 0 8.3 0.7 H4.6 A3.9 3.9 0 0 0 0.7 4.6 V11.4 A3.9 3.9 0 0 0 4.6 15.3 H10.6" fill="none" stroke="#c94ee2" stroke-width="1.3"/><path d="M4.6 5.4h3.8 M4.6 9.9h6" stroke="#a63fd6" stroke-width="1.2"/></svg></div>
<div class="av" style="left:1199.50px;top:627.70px;"></div>
<div class="t" style="left:1205.95px;top:636.71px;font-size:10.5px;color:#2a2a2a;">HP</div>
<div class="t" style="left:1207.16px;top:660.13px;font-size:10px;color:#2a2a2a;letter-spacing:0.096px;">20%</div>
<div class="bar" style="left:962.50px;top:662.20px;width:234.49px;"><i style="width:46.90px"></i></div>
<div class="t" style="left:961.92px;top:685.29px;font-size:11px;color:#444444;transform:scaleX(1.1551);transform-origin:0 0;">Start date</div>
<div class="db" style="left:1021.50px;top:683.00px;"></div>
<div class="t" style="left:1025.72px;top:685.74px;font-size:10px;color:#9a9a9a;transform:scaleX(1.1542);transform-origin:0 0;">23-05-2023</div>
<div class="t" style="left:1103.99px;top:685.29px;font-size:11px;color:#444444;transform:scaleX(1.1201);transform-origin:0 0;">Due date</div>
<div class="db" style="left:1160.00px;top:683.00px;"></div>
<div class="t" style="left:1164.22px;top:685.74px;font-size:10px;color:#9a9a9a;transform:scaleX(1.1542);transform-origin:0 0;">28-05-2023</div>
<div class="col" style="left:1250.00px;"></div>
<div class="t" style="left:1263.21px;top:188.73px;font-size:12.6px;color:#2b2b2b;transform:scaleX(1.2067);transform-origin:0 0;-webkit-text-stroke:0.15px #2b2b2b;">In Specifications(4)</div>
<svg class="chev" style="left:1534.00px;top:189px" width="10" height="14" viewBox="0 0 10 14"><path d="M7.5 1.5 L2.5 7 L7.5 12.5" fill="none" stroke="#5a6470" stroke-width="1.1"/></svg>
<div class="card" style="left:1257.00px;top:232.00px;"></div>
<div class="t" style="left:1265.46px;top:244.87px;font-size:11.5px;color:#585858;transform:scaleX(1.0900);transform-origin:0 0;">Design a new issue modal</div>
<div class="t" style="left:1266.25px;top:271.32px;font-size:12.5px;color:#6c9ae6;letter-spacing:-0.140px;">Task #527</div>
<div class="ic" style="left:1478.50px;top:272.00px;"><svg width="16" height="13" viewBox="0 0 16 13"><path d="M8.3 2.4 H5.9 A4.2 4.2 0 0 0 5.9 10.8 H9.3" fill="none" stroke="#9a26d6" stroke-width="2.4"/><path d="M10.6 2.3h4.8 M10.6 6.9h4.8 M10.6 11.2h4.8" stroke="#9a26d6" stroke-width="1.8"/></svg></div>
<div class="av" style="left:1503.50px;top:263.70px;"></div>
<div class="t" style="left:1510.45px;top:272.71px;font-size:10.5px;color:#2a2a2a;">SP</div>
<div class="t" style="left:1511.16px;top:296.14px;font-size:10px;color:#2a2a2a;letter-spacing:0.096px;">80%</div>
<div class="bar" style="left:1266.50px;top:298.20px;width:234.49px;"><i style="width:187.59px"></i></div>
<div class="t" style="left:1265.92px;top:321.29px;font-size:11px;color:#444444;transform:scaleX(1.1551);transform-origin:0 0;">Start date</div>
<div class="db" style="left:1325.50px;top:319.00px;"></div>
<div class="t" style="left:1329.72px;top:321.74px;font-size:10px;color:#9a9a9a;transform:scaleX(1.1542);transform-origin:0 0;">23-05-2023</div>
<div class="t" style="left:1407.99px;top:321.29px;font-size:11px;color:#444444;transform:scaleX(1.1201);transform-origin:0 0;">Due date</div>
<div class="db" style="left:1464.00px;top:319.00px;"></div>
<div class="t" style="left:1468.22px;top:321.74px;font-size:10px;color:#9a9a9a;transform:scaleX(1.1542);transform-origin:0 0;">28-05-2023</div>
<div class="card" style="left:1257.00px;top:353.00px;"></div>
<div class="t" style="left:1266.23px;top:365.87px;font-size:11.5px;color:#585858;transform:scaleX(1.0900);transform-origin:0 0;">To check login form</div>
<div class="t" style="left:1266.25px;top:392.32px;font-size:12.5px;color:#6c9ae6;letter-spacing:-0.141px;">Task #524</div>
<div class="ic" style="left:1478.50px;top:393.00px;"><svg width="16" height="13" viewBox="0 0 16 13"><path d="M8.3 2.4 H5.9 A4.2 4.2 0 0 0 5.9 10.8 H9.3" fill="none" stroke="#9a26d6" stroke-width="2.4"/><path d="M10.6 2.3h4.8 M10.6 6.9h4.8 M10.6 11.2h4.8" stroke="#9a26d6" stroke-width="1.8"/></svg></div>
<div class="av" style="left:1503.50px;top:384.70px;"></div>
<div class="t" style="left:1510.30px;top:393.71px;font-size:10.5px;color:#2a2a2a;">SH</div>
<div class="t" style="left:1505.51px;top:417.14px;font-size:10px;color:#2a2a2a;letter-spacing:0.082px;">100%</div>
<div class="bar" style="left:1266.50px;top:419.20px;width:228.92px;"><i style="width:228.92px"></i></div>
<div class="t" style="left:1265.92px;top:442.29px;font-size:11px;color:#444444;transform:scaleX(1.1551);transform-origin:0 0;">Start date</div>
<div class="db" style="left:1325.50px;top:440.00px;"></div>
<div class="t" style="left:1329.72px;top:442.74px;font-size:10px;color:#9a9a9a;transform:scaleX(1.1542);transform-origin:0 0;">23-05-2023</div>
<div class="t" style="left:1407.99px;top:442.29px;font-size:11px;color:#444444;transform:scaleX(1.1201);transform-origin:0 0;">Due date</div>
<div class="db" style="left:1464.00px;top:440.00px;"></div>
<div class="t" style="left:1468.22px;top:442.74px;font-size:10px;color:#9a9a9a;transform:scaleX(1.1542);transform-origin:0 0;">28-05-2023</div>
<div class="card" style="left:1257.00px;top:475.00px;"></div>
<div class="t" style="left:1265.57px;top:487.87px;font-size:11.5px;color:#585858;transform:scaleX(1.0900);transform-origin:0 0;">UI Design Update</div>
<div class="t" style="left:1266.25px;top:514.32px;font-size:12.5px;color:#6c9ae6;letter-spacing:-0.141px;">Task #523</div>
<div class="ic" style="left:1478.50px;top:515.00px;"><svg width="16" height="13" viewBox="0 0 16 13"><path d="M8.3 2.4 H5.9 A4.2 4.2 0 0 0 5.9 10.8 H9.3" fill="none" stroke="#9a26d6" stroke-width="2.4"/><path d="M10.6 2.3h4.8 M10.6 6.9h4.8 M10.6 11.2h4.8" stroke="#9a26d6" stroke-width="1.8"/></svg></div>
<div class="av" style="left:1503.50px;top:506.70px;"></div>
<div class="t" style="left:1511.65px;top:515.71px;font-size:10.5px;color:#2a2a2a;">AJ</div>
<div class="t" style="left:1511.16px;top:539.13px;font-size:10px;color:#2a2a2a;letter-spacing:0.096px;">20%</div>
<div class="bar" style="left:1266.50px;top:541.20px;width:234.49px;"><i style="width:46.90px"></i></div>
<div class="t" style="left:1265.92px;top:564.29px;font-size:11px;color:#444444;transform:scaleX(1.1551);transform-origin:0 0;">Start date</div>
<div class="db" style="left:1325.50px;top:562.00px;"></div>
<div class="t" style="left:1329.72px;top:564.74px;font-size:10px;color:#9a9a9a;transform:scaleX(1.1542);transform-origin:0 0;">23-05-2023</div>
<div class="t" style="left:1407.99px;top:564.29px;font-size:11px;color:#444444;transform:scaleX(1.1201);transform-origin:0 0;">Due date</div>
<div class="db" style="left:1464.00px;top:562.00px;"></div>
<div class="t" style="left:1468.22px;top:564.74px;font-size:10px;color:#9a9a9a;transform:scaleX(1.1542);transform-origin:0 0;">28-05-2023</div>
<div class="card" style="left:1257.00px;top:596.00px;"></div>
<div class="t" style="left:1265.46px;top:608.87px;font-size:11.5px;color:#585858;transform:scaleX(1.0900);transform-origin:0 0;">Feature Request</div>
<div class="t" style="left:1266.25px;top:635.32px;font-size:12.5px;color:#6c9ae6;letter-spacing:-0.141px;">Task #520</div>
<div class="ic" style="left:1478.50px;top:636.00px;"><svg width="16" height="13" viewBox="0 0 16 13"><path d="M8.3 2.4 H5.9 A4.2 4.2 0 0 0 5.9 10.8 H9.3" fill="none" stroke="#9a26d6" stroke-width="2.4"/><path d="M10.6 2.3h4.8 M10.6 6.9h4.8 M10.6 11.2h4.8" stroke="#9a26d6" stroke-width="1.8"/></svg></div>
<div class="av" style="left:1503.50px;top:627.70px;"></div>
<div class="t" style="left:1511.65px;top:636.71px;font-size:10.5px;color:#2a2a2a;">AJ</div>
<div class="t" style="left:1511.16px;top:660.13px;font-size:10px;color:#2a2a2a;letter-spacing:0.096px;">20%</div>
<div class="bar" style="left:1266.50px;top:662.20px;width:234.49px;"><i style="width:46.90px"></i></div>
<div class="t" style="left:1265.92px;top:685.29px;font-size:11px;color:#444444;transform:scaleX(1.1551);transform-origin:0 0;">Start date</div>
<div class="db" style="left:1325.50px;top:683.00px;"></div>
<div class="t" style="left:1329.72px;top:685.74px;font-size:10px;color:#9a9a9a;transform:scaleX(1.1542);transform-origin:0 0;">23-05-2023</div>
<div class="t" style="left:1407.99px;top:685.29px;font-size:11px;color:#444444;transform:scaleX(1.1201);transform-origin:0 0;">Due date</div>
<div class="db" style="left:1464.00px;top:683.00px;"></div>
<div class="t" style="left:1468.22px;top:685.74px;font-size:10px;color:#9a9a9a;transform:scaleX(1.1542);transform-origin:0 0;">28-05-2023</div>
<div class="col" style="left:1554.00px;"></div>
<div class="t" style="left:1567.37px;top:188.73px;font-size:12.6px;color:#2b2b2b;transform:scaleX(1.2260);transform-origin:0 0;-webkit-text-stroke:0.15px #2b2b2b;">Done(4)</div>
<svg class="chev" style="left:1838.00px;top:189px" width="10" height="14" viewBox="0 0 10 14"><path d="M7.5 1.5 L2.5 7 L7.5 12.5" fill="none" stroke="#5a6470" stroke-width="1.1"/></svg>
<div class="card" style="left:1561.00px;top:232.00px;"></div>
<div class="t" style="left:1570.50px;top:244.87px;font-size:11.5px;color:#585858;transform:scaleX(1.0900);transform-origin:0 0;">All the projects should appear in project search</div>
<div class="t" style="left:1570.25px;top:271.32px;font-size:12.5px;color:#6c9ae6;letter-spacing:-0.141px;">Task #533</div>
<div class="ic" style="left:1782.50px;top:272.00px;"><svg width="16" height="13" viewBox="0 0 16 13"><path d="M8.3 2.4 H5.9 A4.2 4.2 0 0 0 5.9 10.8 H9.3" fill="none" stroke="#9a26d6" stroke-width="2.4"/><path d="M10.6 2.3h4.8 M10.6 6.9h4.8 M10.6 11.2h4.8" stroke="#9a26d6" stroke-width="1.8"/></svg></div>
<div class="av" style="left:1807.50px;top:263.70px;"></div>
<div class="t" style="left:1814.30px;top:272.71px;font-size:10.5px;color:#2a2a2a;">SH</div>
<div class="t" style="left:1815.16px;top:296.14px;font-size:10px;color:#2a2a2a;letter-spacing:0.097px;">30%</div>
<div class="bar" style="left:1570.50px;top:298.20px;width:234.49px;"><i style="width:70.35px"></i></div>
<div class="t" style="left:1569.92px;top:321.29px;font-size:11px;color:#444444;transform:scaleX(1.1551);transform-origin:0 0;">Start date</div>
<div class="db" style="left:1629.50px;top:319.00px;"></div>
<div class="t" style="left:1633.84px;top:321.74px;font-size:10px;color:#9a9a9a;transform:scaleX(1.1519);transform-origin:0 0;">02-10-2023</div>
<div class="t" style="left:1711.99px;top:321.29px;font-size:11px;color:#444444;transform:scaleX(1.1201);transform-origin:0 0;">Due date</div>
<div class="db" style="left:1768.00px;top:319.00px;"></div>
<div class="t" style="left:1772.34px;top:321.74px;font-size:10px;color:#9a9a9a;transform:scaleX(1.1519);transform-origin:0 0;">04-10-2023</div>
<div class="card" style="left:1561.00px;top:353.00px;"></div>
<div class="t" style="left:1570.23px;top:365.87px;font-size:11.5px;color:#585858;transform:scaleX(1.0900);transform-origin:0 0;">To check the project search</div>
<div class="t" style="left:1570.25px;top:392.32px;font-size:12.5px;color:#6c9ae6;letter-spacing:-0.140px;">Task #532</div>
<div class="ic" style="left:1784.60px;top:392.30px;"><svg width="16" height="12" viewBox="0 0 16 12"><path d="M1 3h14 M1 9h14" stroke="#e6c38c" stroke-width="2.6"/></svg></div>
<div class="av" style="left:1807.50px;top:384.70px;"></div>
<div class="t" style="left:1813.95px;top:393.71px;font-size:10.5px;color:#2a2a2a;">HP</div>
<div class="t" style="left:1815.16px;top:417.14px;font-size:10px;color:#2a2a2a;letter-spacing:0.097px;">30%</div>
<div class="bar" style="left:1570.50px;top:419.20px;width:234.49px;"><i style="width:70.35px"></i></div>
<div class="t" style="left:1569.92px;top:442.29px;font-size:11px;color:#444444;transform:scaleX(1.1551);transform-origin:0 0;">Start date</div>
<div class="db" style="left:1629.50px;top:440.00px;"></div>
<div class="t" style="left:1633.84px;top:442.74px;font-size:10px;color:#9a9a9a;transform:scaleX(1.1519);transform-origin:0 0;">02-10-2023</div>
<div class="t" style="left:1711.99px;top:442.29px;font-size:11px;color:#444444;transform:scaleX(1.1201);transform-origin:0 0;">Due date</div>
<div class="db" style="left:1768.00px;top:440.00px;"></div>
<div class="t" style="left:1772.34px;top:442.74px;font-size:10px;color:#9a9a9a;transform:scaleX(1.1519);transform-origin:0 0;">04-10-2023</div>
<div class="card" style="left:1561.00px;top:475.00px;"></div>
<div class="t" style="left:1569.95px;top:487.87px;font-size:11.5px;color:#585858;transform:scaleX(1.0900);transform-origin:0 0;">Security Patch Required</div>
<div class="t" style="left:1570.25px;top:514.32px;font-size:12.5px;color:#6c9ae6;letter-spacing:-0.140px;">Task #531</div>
<div class="ic" style="left:1782.50px;top:515.00px;"><svg width="16" height="13" viewBox="0 0 16 13"><path d="M8.3 2.4 H5.9 A4.2 4.2 0 0 0 5.9 10.8 H9.3" fill="none" stroke="#9a26d6" stroke-width="2.4"/><path d="M10.6 2.3h4.8 M10.6 6.9h4.8 M10.6 11.2h4.8" stroke="#9a26d6" stroke-width="1.8"/></svg></div>
<div class="av" style="left:1807.50px;top:506.70px;"></div>
<div class="t" style="left:1814.30px;top:515.71px;font-size:10.5px;color:#2a2a2a;">SH</div>
<div class="t" style="left:1815.16px;top:539.13px;font-size:10px;color:#2a2a2a;letter-spacing:0.097px;">40%</div>
<div class="bar" style="left:1570.50px;top:541.20px;width:234.49px;"><i style="width:93.79px"></i></div>
<div class="t" style="left:1569.92px;top:564.29px;font-size:11px;color:#444444;transform:scaleX(1.1551);transform-origin:0 0;">Start date</div>
<div class="db" style="left:1629.50px;top:562.00px;"></div>
<div class="t" style="left:1633.84px;top:564.74px;font-size:10px;color:#9a9a9a;transform:scaleX(1.1519);transform-origin:0 0;">03-10-2023</div>
<div class="t" style="left:1711.99px;top:564.29px;font-size:11px;color:#444444;transform:scaleX(1.1201);transform-origin:0 0;">Due date</div>
<div class="db" style="left:1768.00px;top:562.00px;"></div>
<div class="t" style="left:1772.34px;top:564.74px;font-size:10px;color:#9a9a9a;transform:scaleX(1.1519);transform-origin:0 0;">05-10-2023</div>
<div class="card" style="left:1561.00px;top:596.00px;"></div>
<div class="t" style="left:1569.95px;top:608.87px;font-size:11.5px;color:#585858;transform:scaleX(1.0900);transform-origin:0 0;">create login page UI and add registration page</div>
<div class="t" style="left:1570.25px;top:635.32px;font-size:12.5px;color:#6c9ae6;letter-spacing:-0.140px;">Task #529</div>
<div class="ic" style="left:1782.50px;top:636.00px;"><svg width="16" height="13" viewBox="0 0 16 13"><path d="M8.3 2.4 H5.9 A4.2 4.2 0 0 0 5.9 10.8 H9.3" fill="none" stroke="#9a26d6" stroke-width="2.4"/><path d="M10.6 2.3h4.8 M10.6 6.9h4.8 M10.6 11.2h4.8" stroke="#9a26d6" stroke-width="1.8"/></svg></div>
<div class="av" style="left:1807.50px;top:627.70px;"></div>
<div class="t" style="left:1813.95px;top:636.71px;font-size:10.5px;color:#2a2a2a;">HP</div>
<div class="t" style="left:1815.16px;top:660.13px;font-size:10px;color:#2a2a2a;letter-spacing:0.097px;">30%</div>
<div class="bar" style="left:1570.50px;top:662.20px;width:234.49px;"><i style="width:70.35px"></i></div>
<div class="t" style="left:1569.92px;top:685.29px;font-size:11px;color:#444444;transform:scaleX(1.1551);transform-origin:0 0;">Start date</div>
<div class="db" style="left:1629.50px;top:683.00px;"></div>
<div class="t" style="left:1633.84px;top:685.74px;font-size:10px;color:#9a9a9a;transform:scaleX(1.1519);transform-origin:0 0;">03-10-2023</div>
<div class="t" style="left:1711.99px;top:685.29px;font-size:11px;color:#444444;transform:scaleX(1.1201);transform-origin:0 0;">Due date</div>
<div class="db" style="left:1768.00px;top:683.00px;"></div>
<div class="t" style="left:1772.34px;top:685.74px;font-size:10px;color:#9a9a9a;transform:scaleX(1.1519);transform-origin:0 0;">04-10-2023</div>
<div id="foot"></div>
<svg style="position:absolute;left:194.6px;top:265.2px" width="24" height="24" viewBox="-12 -12 24 24"><path d="M0 -11.5 L4.6 -6.9 V-6.2 H1.5 V-1.5 H6.2 V-4.6 H6.9 L11.5 0 L6.9 4.6 H6.2 V1.5 H1.5 V6.2 H4.6 V6.9 L0 11.5 L-4.6 6.9 V6.2 H-1.5 V1.5 H-6.2 V4.6 H-6.9 L-11.5 0 L-6.9 -4.6 H-6.2 V-1.5 H-1.5 V-6.2 H-4.6 V-6.9 Z" fill="#fff" stroke="#222" stroke-width="1" stroke-linejoin="miter"/></svg>
<div class="t" style="left:808.35px;top:921.87px;font-size:11.5px;color:#6b6b6b;letter-spacing:0.285px;">Powered by <span style="color:#3b4e6e">Redmine</span> © 2006-2022 Jean-Philippe Lang</div><div class="t" style="left:743.45px;top:940.62px;font-size:12.5px;color:#707070;letter-spacing:0.418px;">If you find any bug please report to this email</div><div class="t" style="left:1014.65px;top:940.62px;font-size:12.5px;color:#2e4470;letter-spacing:0.345px;-webkit-text-stroke:0.35px #2e4470;">support@redmineflux.com</div>
</body></html>
